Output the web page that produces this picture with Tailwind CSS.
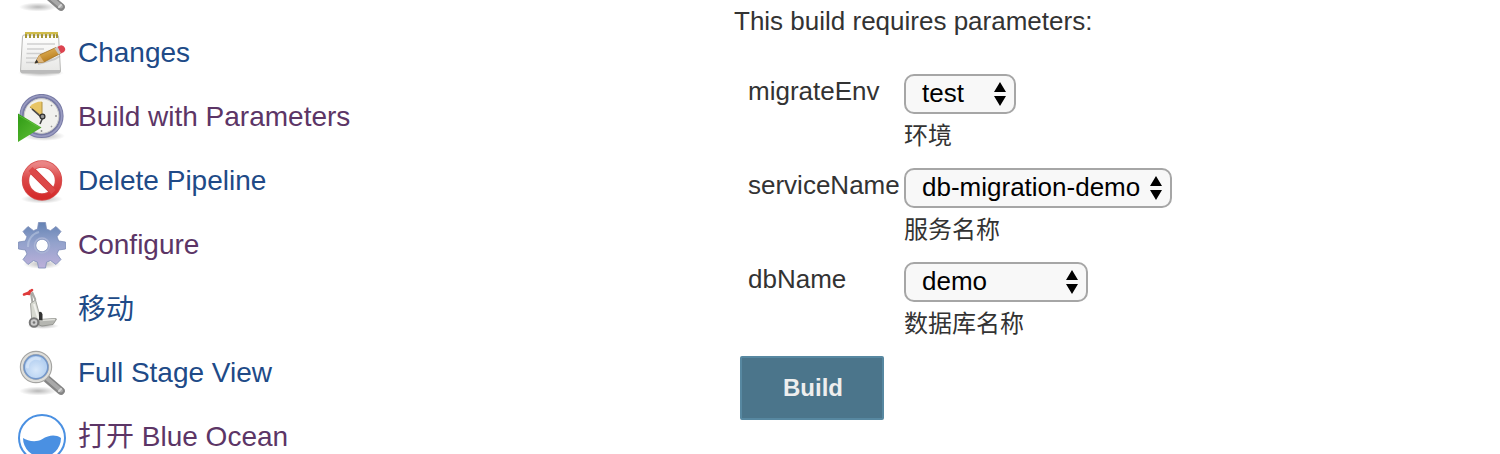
<!DOCTYPE html>
<html lang="zh-CN">
<head>
<meta charset="utf-8">
<title>Build with Parameters</title>
<script src="https://cdn.jsdelivr.net/npm/@tailwindcss/browser@4"></script>
</head>
<body class="h-[454px] overflow-hidden bg-white font-['Liberation_Sans','Noto_Sans_CJK_SC',sans-serif] text-[#333]">
<svg class="absolute size-0">
  <defs>
    <radialGradient id="shade"><stop offset="0" stop-color="#000" stop-opacity=".28"/><stop offset="1" stop-color="#000" stop-opacity="0"/></radialGradient>
    <radialGradient id="lens" cx=".5" cy=".6" r=".6"><stop offset="0" stop-color="#d8e8fa"/><stop offset="1" stop-color="#a3c4ec"/></radialGradient>
    <linearGradient id="handle" x1="0" y1="1" x2="1" y2="0"><stop offset="0" stop-color="#777"/><stop offset=".5" stop-color="#b4b4b4"/><stop offset="1" stop-color="#858585"/></linearGradient>
    <linearGradient id="paper" x1="0" y1="0" x2="0" y2="1"><stop offset="0" stop-color="#fff"/><stop offset="1" stop-color="#e6e6e4"/></linearGradient>
    <linearGradient id="pencil" x1="0" y1="0" x2=".5" y2="1"><stop offset="0" stop-color="#edc26a"/><stop offset="1" stop-color="#b47819"/></linearGradient>
    <linearGradient id="red" x1="0" y1="0" x2="0" y2="1"><stop offset="0" stop-color="#ea8585"/><stop offset=".45" stop-color="#dc4848"/><stop offset="1" stop-color="#d42c2c"/></linearGradient>
    <linearGradient id="green" x1="0" y1="0" x2="1" y2="1"><stop offset="0" stop-color="#2f9a14"/><stop offset=".6" stop-color="#4fb32b"/><stop offset="1" stop-color="#3c9a1b"/></linearGradient>
    <linearGradient id="gear" x1="0" y1="0" x2="0" y2="1"><stop offset="0" stop-color="#6583b4"/><stop offset=".45" stop-color="#93a2cc"/><stop offset="1" stop-color="#bcb0da"/></linearGradient>
    <symbol id="search" viewBox="0 0 48 48">
      <ellipse cx="20" cy="41" rx="19" ry="4.5" fill="url(#shade)"/>
      <path d="M29 29 43 41" stroke="#858585" stroke-width="7.6" stroke-linecap="round"/>
      <path d="M29 28.500 43 40.500" stroke="#a9a9a9" stroke-width="4" stroke-linecap="round"/>
      <path d="m41 41 2-2" stroke="#d5d5d5" stroke-width="2" stroke-linecap="round"/>
      <circle cx="18" cy="17" r="14.2" fill="url(#lens)" stroke="#a4a4a2" stroke-width="4"/>
      <circle cx="18" cy="17" r="14" fill="none" stroke="#dededb" stroke-width="2.2"/>
      <circle cx="18" cy="17" r="11.8" fill="none" stroke="#7396c8" stroke-width="1.5"/>
      <path d="M9.5 17a8.5 8.5 0 0 1 12-8" fill="none" stroke="#e1edfb" stroke-width="3" stroke-linecap="round" opacity=".6"/>
    </symbol>
  </defs>
</svg>
<div class="flex">
  <nav class="-mt-[34px] flex w-[716px] shrink-0 flex-col gap-4 pl-[18px] text-[28px] leading-[46px] whitespace-nowrap text-[#204a87]">
    <a class="flex h-12 items-start gap-3"><svg class="size-12 shrink-0"><use href="#search"/></svg></a>
    <a class="flex h-12 items-start gap-3">
      <svg class="size-12 shrink-0" viewBox="0 0 48 48">
        <ellipse cx="23" cy="43" rx="23" ry="4" fill="url(#shade)"/>
        <path d="M6 5h33q1.500 0 1.600 2L42.500 41q0 2-2 2h-36q-2 0-2-2L4.500 7Q4.500 5 6 5Z" fill="url(#paper)" stroke="#b9b9b7"/>
        <path d="M3 40h39v1.500q0 1.500-2 1.500H4.500Q3 43 3 41.500Z" fill="#bbb"/>
        <path d="M9 14h28M9 19h17M8.500 23.500h20M8 28h12M8 32.500h10" stroke="#cfcfcf" stroke-width="1.600"/>
        <path d="M8 3v5M12 3v5M16 3v5M20 3v5M24 3v5M28 3v5M32 3v5M36 3v5M39 3v5" stroke="#9b8a1f" stroke-width="1.800"/>
        <path d="M7 3.200h33" stroke="#d0bc4c" stroke-width="2.200"/>
        <path d="m20 34 17-5 5-3" stroke="#999" fill="none" stroke-width="2" opacity=".4"/>
        <path d="m17 33 4.500-8L38 17.500l4.500 6L26 32Z" fill="url(#pencil)" stroke="#a3701f" stroke-width=".8"/>
        <path d="m17 33 4.500-8 4.500 7Z" fill="#ddb67c"/>
        <path d="m16.500 33.500 2-4 2 3Z" fill="#333"/>
        <path d="m36.500 18.200 4 6.200 2.500-1.400-3.500-6.200Z" fill="#c6c6c6"/>
        <path d="m39.500 16.800 3.500-1.500q2.500-.3 4 2.700 1 2.500-1 4l-3 1.400Z" fill="#dc4450"/>
      </svg>
      <span>Changes</span>
    </a>
    <a class="flex h-12 items-start gap-3 text-[#5c3566]">
      <svg class="size-12 shrink-0" viewBox="0 0 48 48">
        <ellipse cx="26" cy="42" rx="21" ry="5" fill="url(#shade)"/>
        <circle cx="23.500" cy="22" r="19.800" fill="#f1f1ee" stroke="#787ba5" stroke-width="4.600"/>
        <circle cx="23.500" cy="22" r="20.300" fill="none" stroke="#9a9cc2" stroke-width="1.600"/>
        <circle cx="23.500" cy="22" r="17.300" fill="none" stroke="#cbcbc8" stroke-width="1"/>
        <path d="M24 22 11.500 13q4.500-5.500 12.500-5.500Z" fill="#e8c565"/>
        <path d="m12 13 12.500 9.500M24 8v12" stroke="#b29342" stroke-width="1"/>
        <path d="m14 15 9 8M25 23l-3 7" stroke="#444" stroke-width="1.600"/>
        <circle cx="24.500" cy="22.500" r="2.400" fill="#999" stroke="#333" stroke-width="1.300"/>
        <path d="M37 22h2M23.500 36v2M33 12l1-1M33 32l1 1" stroke="#999" stroke-width="1.500"/>
        <path d="M0 19.500 23.500 33.500 0 48Z" fill="url(#green)"/>
        <path d="M.8 21.500 21.500 33.500" stroke="#68c545" stroke-width="1" opacity=".7"/>
      </svg>
      <span>Build with Parameters</span>
    </a>
    <a class="flex h-12 items-start gap-3">
      <svg class="size-12 shrink-0" viewBox="0 0 48 48">
        <ellipse cx="24" cy="41" rx="21" ry="4.500" fill="url(#shade)"/>
        <circle cx="24" cy="22.500" r="16.500" fill="#fff" stroke="#d65050" stroke-width="7.400"/>
        <path d="m12.500 11 23 23" stroke="#cf3838" stroke-width="7.400"/>
        <circle cx="24" cy="22.500" r="16.500" fill="none" stroke="url(#red)" stroke-width="5.800"/>
        <path d="m12.500 11 23 23" stroke="#dc4848" stroke-width="5.800"/>
      </svg>
      <span>Delete Pipeline</span>
    </a>
    <a class="flex h-12 items-start gap-3 text-[#5c3566]">
      <svg class="size-12 shrink-0" viewBox="0 0 48 48">
        <ellipse cx="24" cy="42" rx="19" ry="5" fill="url(#shade)"/>
        <path fill-rule="evenodd" d="M20.500.5h7l1 6.500 4 1.700 5.500-4.200 5 5-4 5.300 1.700 4.200 6.800 1v7l-6.800 1-1.700 4 4 5.500-5 5-5.500-4-4 1.700-1 5.800h-7l-1-5.800-4-1.700-5.500 4-5-5 4-5.500-1.700-4L.5 27v-7l6.800-1L9 14.800 5 9.500l5-5 5.500 4.200 4-1.700ZM24 17.300a6.200 6.200 0 1 0 .1 0Z" fill="url(#gear)" stroke="#7c8db8" stroke-width=".8" stroke-linejoin="round"/>
        <path d="M10 25a14.500 14.500 0 0 1 11-15" fill="none" stroke="#c4cfe6" stroke-width="2" opacity=".5"/>
        <circle cx="24" cy="23.500" r="7.500" fill="none" stroke="#aab4d5" stroke-width="1.500"/>
      </svg>
      <span>Configure</span>
    </a>
    <a class="flex h-12 items-start gap-3 leading-[48px]">
      <svg class="size-12 shrink-0" viewBox="0 0 48 48">
        <ellipse cx="25" cy="40" rx="16" ry="3" fill="url(#shade)"/>
        <path d="m13 7 1.500 10M14 6l3.500 8" fill="none" stroke="#a9a9a5" stroke-width="2"/>
        <path d="m12.500 17.500 5-3.500 5.500 20-9 3Z" fill="#d6d8d0" stroke="#a2a39e"/>
        <path d="m16 18 4.500 15" stroke="#f1f1ed" stroke-width="2"/>
        <path d="m21 33.500 16.500-1q1.500 0 .5 1.500l-3 4.500L24 40l-3-1Z" fill="#b5b6b1" stroke="#888984" stroke-width=".8"/>
        <path d="m22.500 34.500 14.500-1" stroke="#dedfda" stroke-width="1.300"/>
        <path d="M21 26q3-1 3.500 2.500v6L21 34Z" fill="#333"/>
        <circle cx="16" cy="36.500" r="4.300" fill="#ccc" stroke="#777" stroke-width="2"/>
        <circle cx="16" cy="36.500" r="1.300" fill="#777"/>
        <path d="M6 8.500 10 7l4-3M11 8l1-3" fill="none" stroke="#df3b3b" stroke-width="2.600" stroke-linecap="round" stroke-linejoin="round"/>
      </svg>
      <span>移动</span>
    </a>
    <a class="flex h-12 items-start gap-3"><svg class="size-12 shrink-0"><use href="#search"/></svg><span>Full Stage View</span></a>
    <a class="flex h-12 items-start gap-3 text-[#5c3566]">
      <svg class="size-12 shrink-0" viewBox="0 0 48 48">
        <circle cx="24" cy="24" r="23" fill="#fff" stroke="#4a90e2" stroke-width="2"/>
        <path d="M5 24c4.500 2.500 12 5 19 1.200 7-4 13-5 19-1.200a19 19 0 0 1-38 0Z" fill="#4a90e2"/>
      </svg>
      <span>打开 Blue Ocean</span>
    </a>
  </nav>

  <main class="flex flex-col items-start pl-[18px] text-[26px] whitespace-nowrap">
    <h1 class="h-[74px] leading-[42px]">This build requires parameters:</h1>
    <div class="grid grid-cols-[156px_auto] pl-[14px]">
      <label class="leading-[34px]">migrateEnv</label>
      <div class="h-[94px]">
        <div class="flex h-10 w-28 items-center justify-between rounded-[10px] border-2 border-[#a6a6a6] bg-[#f8f8f8] pr-2 pl-4 leading-[36px] text-black"><span class="-mt-0.5">test</span><svg class="h-6 w-3" viewBox="0 0 12 24"><path d="M6 0l6 10H0ZM0 14h12L6 24Z"/></svg></div>
        <p class="text-2xl leading-[44px]">环境</p>
      </div>
      <label class="leading-[34px]">serviceName</label>
      <div class="h-[94px]">
        <div class="flex h-10 w-[268px] items-center justify-between rounded-[10px] border-2 border-[#a6a6a6] bg-[#f8f8f8] pr-2 pl-4 leading-[36px] text-black"><span class="-mt-0.5">db-migration-demo</span><svg class="h-6 w-3" viewBox="0 0 12 24"><path d="M6 0l6 10H0ZM0 14h12L6 24Z"/></svg></div>
        <p class="text-2xl leading-[44px]">服务名称</p>
      </div>
      <label class="leading-[34px]">dbName</label>
      <div class="h-[94px]">
        <div class="flex h-10 w-[184px] items-center justify-between rounded-[10px] border-2 border-[#a6a6a6] bg-[#f8f8f8] pr-2 pl-4 leading-[36px] text-black"><span class="-mt-0.5">demo</span><svg class="h-6 w-3" viewBox="0 0 12 24"><path d="M6 0l6 10H0ZM0 14h12L6 24Z"/></svg></div>
        <p class="text-2xl leading-[44px]">数据库名称</p>
      </div>
    </div>
    <button class="ml-1.5 h-16 w-36 rounded-xs border-2 border-[#5788a1] bg-[#4b758b] pl-0.5 text-2xl leading-[60px] font-bold text-[#eee]">Build</button>
  </main>
</div>
</body>
</html>
